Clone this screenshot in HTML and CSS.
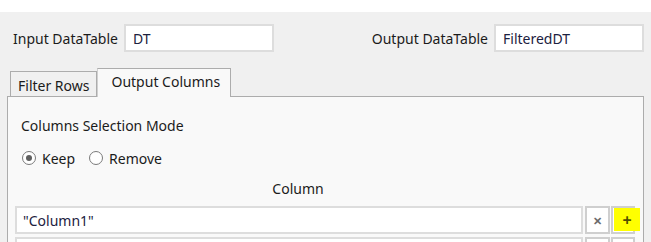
FILE: index.html
```html
<!DOCTYPE html>
<html lang="en">
<head>
    <meta charset="UTF-8">
    <meta name="viewport" content="width=device-width, initial-scale=1.0">
    <title>Filter Data Table</title>
    <link rel="stylesheet" href="styles.css">
</head>
<body>

<div class="topbar"></div>
<div class="dialog">
    <div class="io-row">
        <div class="field">
            <label for="inputDt">Input DataTable</label>
            <input id="inputDt" class="text-box" type="text" value="DT">
        </div>
        <div class="field">
            <label for="outputDt">Output DataTable</label>
            <input id="outputDt" class="text-box" type="text" value="FilteredDT">
        </div>
    </div>

    <div class="tabs">
        <div class="tab">Filter Rows</div>
        <div class="tab active">Output Columns</div>
    </div>

    <div class="panel">
        <div class="mode-title">Columns Selection Mode</div>
        <div class="radios">
            <label class="radio"><span class="dot checked"></span>Keep</label>
            <label class="radio"><span class="dot"></span>Remove</label>
        </div>
        <div class="col-header">Column</div>
        <div class="col-row">
            <div class="col-input">"Column1"</div>
            <button class="sq-btn">&#x2715;</button>
            <button class="sq-btn plus"><span class="hl">+</span></button>
        </div>
        <div class="col-row">
            <div class="col-input"></div>
            <button class="sq-btn"></button>
            <button class="sq-btn"></button>
        </div>
    </div>
</div>

</body>
</html>
```

FILE: styles.css
```css
* { box-sizing: border-box; }
html, body { height: 242px; overflow: hidden; }
body { margin: 0; background: #f0f0f0; font-family: "Segoe UI", "Noto Sans", "Open Sans", sans-serif; font-size: 14px; color: #1b1b1b; }
.topbar { height: 12px; background: #ffffff; }
.dialog { padding: 12px 7px 0 7px; }
.io-row { display: flex; justify-content: space-between; height: 28px; }
.field { display: flex; align-items: center; gap: 6px; }
.field:first-child { padding-left: 6px; }
.field label { white-space: nowrap; }
.text-box { width: 150px; height: 28px; border: 2px solid #dddddd; background: #fff; padding: 0 7px; font: inherit; color: #1c2140; outline: none; }
.tabs { display: flex; align-items: flex-end; height: 44px; padding-left: 3px; }
.tab { height: 25px; padding: 0 7px; border: 1px solid #acacac; border-bottom: none; background: #f0f0f0; display: flex; align-items: center; padding-top: 3px; }
.tab.active { height: 29px; width: 134px; background: #f9f9f9; padding: 0 0 3px 13px; margin-bottom: -1px; position: relative; z-index: 1; border-left: 1px solid #d0d0d0; }
.panel { height: 146px; border: 1px solid #acacac; border-bottom: none; background: #f9f9f9; padding: 0 7px; overflow: hidden; }
.mode-title { padding: 19px 0 0 6px; height: 39px; }
.radios { display: flex; align-items: center; gap: 14px; padding-left: 7px; height: 30px; margin-top: 7px; }
.radio { display: flex; align-items: center; gap: 6px; }
.dot { width: 14px; height: 14px; border: 1px solid #7a7a7a; border-radius: 50%; background: #fff; display: flex; align-items: center; justify-content: center; }
.dot.checked::after { content: ''; width: 6px; height: 6px; border-radius: 50%; background: #5f5f5f; }
.col-header { text-align: center; height: 26px; padding-top: 6px; padding-right: 55px; }
.col-row { display: flex; gap: 2px; height: 28px; margin-top: 7px; margin-bottom: -4px; }
.col-input { width: 568px; border: 2px solid #dddddd; background: #fff; padding: 3px 6px; color: #1c2140; }
.sq-btn { width: 25px; height: 28px; border: 2px solid #cfcfcf; background: #fff; font: inherit; font-size: 11px; font-weight: bold; color: #6b6b6b; padding: 0; display: flex; align-items: center; justify-content: center; position: relative; }
.sq-btn + .sq-btn { width: 24px; margin-left: -1px; }
.plus .hl { position: absolute; left: 1px; top: 0; width: 26px; height: 23px; background: #ffff00; color: #4f4f00; font-size: 16px; font-weight: bold; display: flex; align-items: center; justify-content: center; line-height: 1; }
```
